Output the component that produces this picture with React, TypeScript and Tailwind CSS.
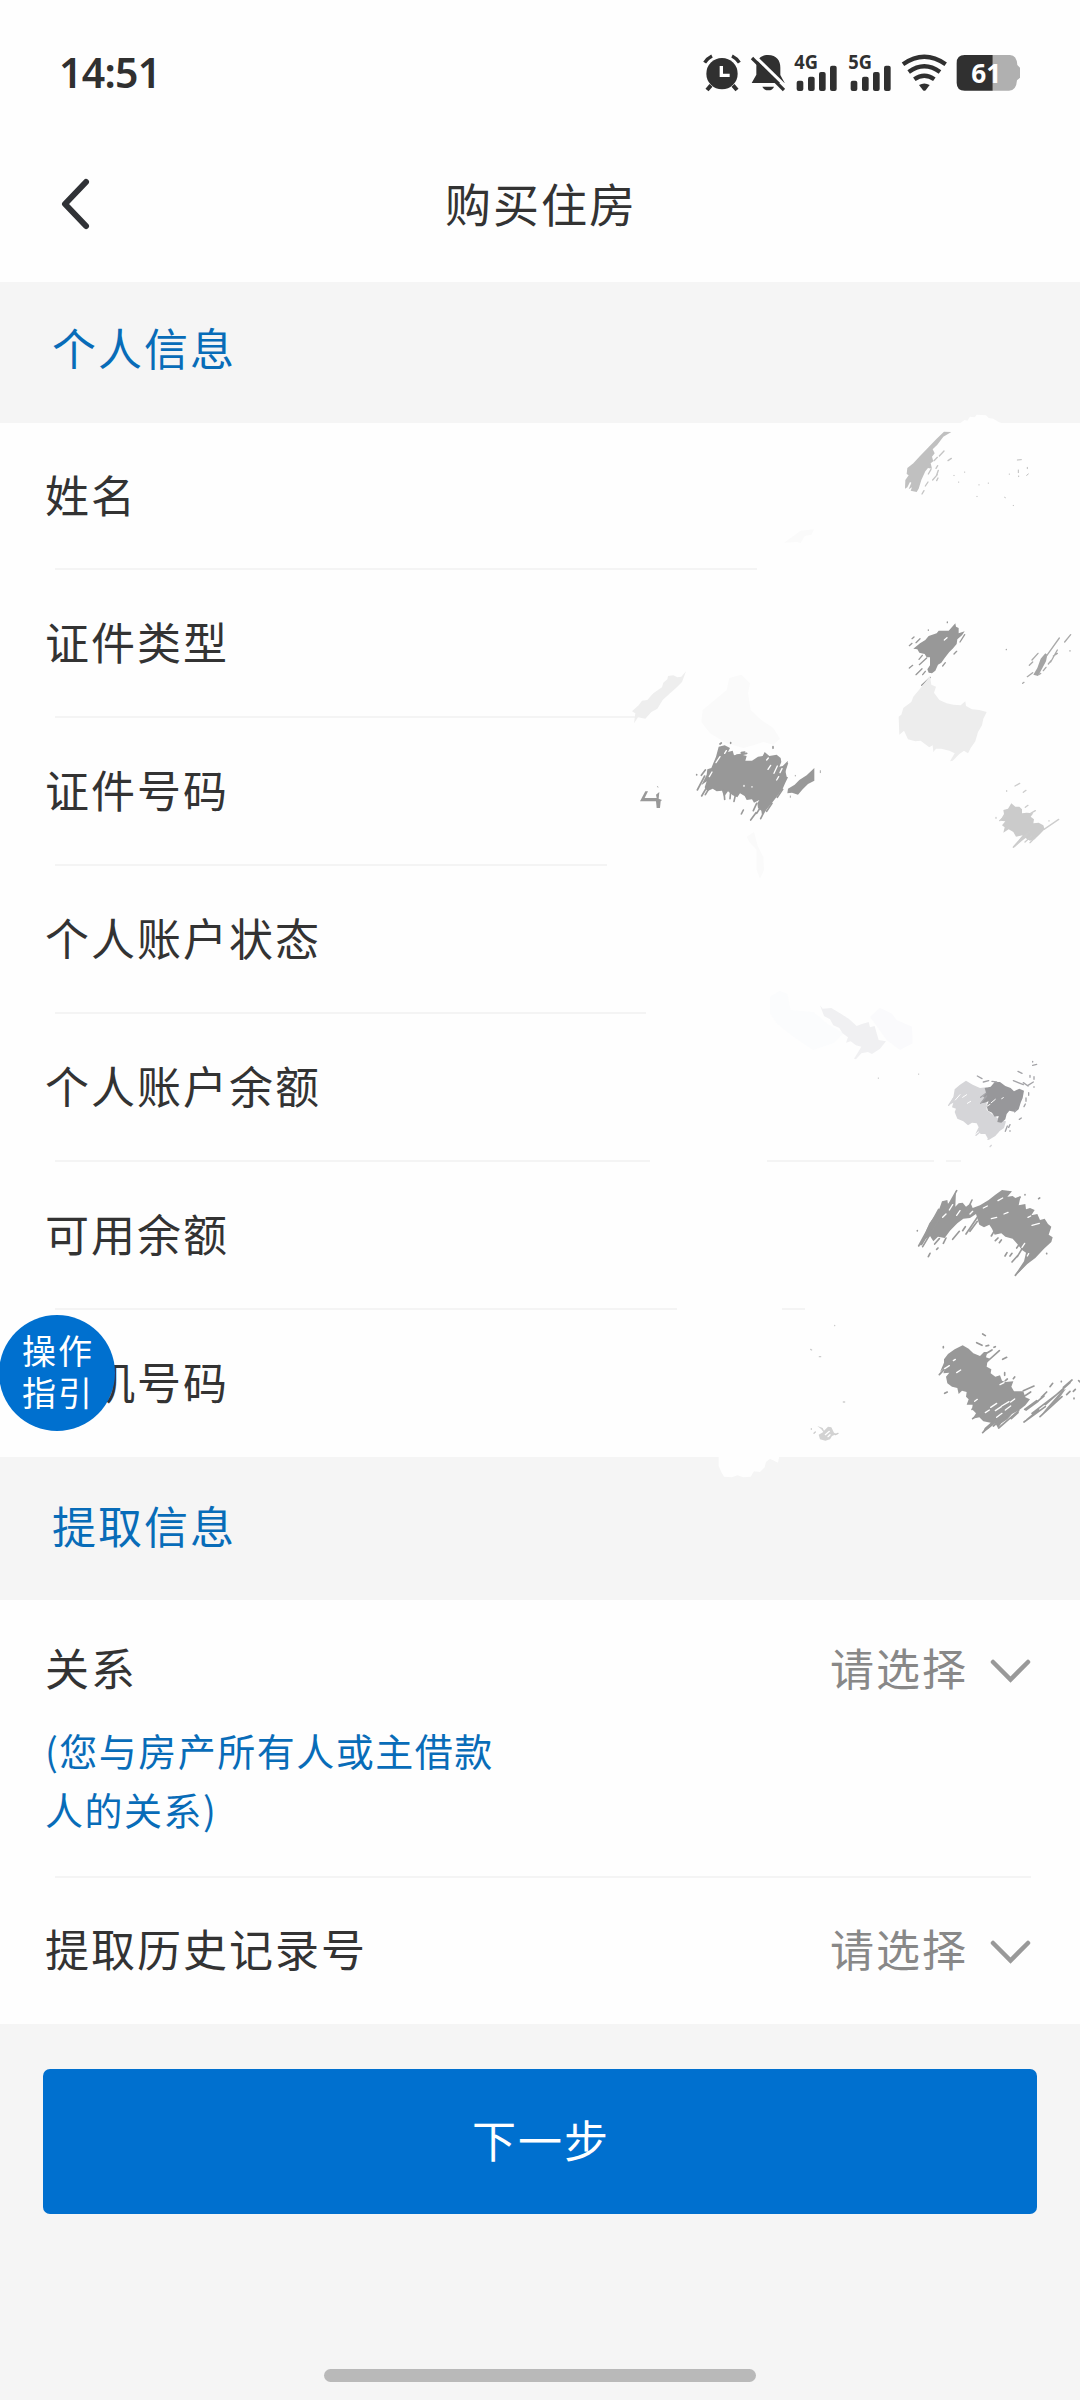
import React from 'react'

interface Divider {
  from: number;
  to: number;
}

interface InfoRowProps {
  label: string;
  dividers: Divider[];
}

interface SelectRowProps {
  label: string;
  hint?: string;
}

const infoRows: InfoRowProps[] = [
  { label: '姓名', dividers: [{ from: 55, to: 757 }] },
  { label: '证件类型', dividers: [{ from: 55, to: 636 }] },
  { label: '证件号码', dividers: [{ from: 55, to: 607 }] },
  { label: '个人账户状态', dividers: [{ from: 55, to: 646 }] },
  { label: '个人账户余额', dividers: [{ from: 55, to: 650 }, { from: 767, to: 934 }, { from: 946, to: 961 }] },
  { label: '可用余额', dividers: [{ from: 55, to: 677 }, { from: 782, to: 805 }] },
  { label: '手机号码', dividers: [] },
]

const SignalIcon = ({ label, x }: { label: string; x: number }) => (
  <svg className='h-[39px] w-auto overflow-visible tracking-normal' viewBox={`${x} 69 ${label === '4G' ? 132 : 135} 117`} fill='#303030'>
    <text x={label === '4G' ? 343 : 505} y='117' fontSize='56' fontWeight='700' textLength='71' lengthAdjust='spacingAndGlyphs' fontFamily='Noto Sans'>{label}</text>
    <g transform={label === '4G' ? '' : 'translate(162 0)'}>
      <rect x='350' y='152' width='20' height='31' rx='6' />
      <rect x='384' y='140' width='20' height='43' rx='6' />
      <rect x='417' y='126' width='20' height='57' rx='6' />
      <rect x='450' y='107' width='20' height='76' rx='6' />
    </g>
  </svg>
)

const StatusBar = () => {
  return (
    <div className='flex h-[120px] items-start justify-between pl-[59px] pr-[59px]'>
      <span className="mt-[43px] font-['Noto_Sans','Noto_Sans_CJK_SC',sans-serif] text-[41px] font-semibold leading-[58px] tracking-[-0.7px] text-[#303030]">14:51</span>
      <div className='mt-[53px] flex gap-[9px] tracking-normal'>
        <svg className='h-[39px] w-[38px]' viewBox='69 69 114 117' fill='none' stroke='#303030'>
          <circle cx='126' cy='131' r='47' fill='#303030' stroke='none' />
          <path d='M74 98q8-13 22-20M178 98q-8-13-22-20' strokeWidth='10' />
          <path d='M93 166L81 180M159 166l12 14' strokeWidth='12' />
          <path d='M124 108v28h25' stroke='#fff' strokeWidth='10' />
        </svg>
        <svg className='h-[39px] w-[35px]' viewBox='210 69 105 117' fill='#303030'>
          <path d='M264 75c26 0 37 17 37 38v22l13 24H215l14-25v-22c0-23 13-37 35-37z' />
          <path d='M247 170h35q-4 11-17 11t-18-11z' />
          <path d='M222 76l98 96' stroke='#fff' strokeWidth='9' />
          <path d='M216 84l96 96' stroke='#303030' strokeWidth='10' />
        </svg>
        <SignalIcon label='4G' x={342} />
        <SignalIcon label='5G' x={501} />
        <svg className='h-[39px] w-[46px]' viewBox='663 69 138 117' fill='none' stroke='#303030' strokeWidth='13'>
          <path d='M669 103q64-45 128 0' />
          <path d='M686 126q47-34 94 0' />
          <path d='M703 148q30-21 60 0' />
          <path d='M717 165q16-9 32 0l-12 16q-4 3-8 0z' fill='#303030' stroke='none' />
        </svg>
        <svg className='h-[39px] w-[65px]' viewBox='828 69 195 117'>
          <path d='M938 75h52q20 0 22 30l8 8v30l-9 8q-2 31-24 31h-49z' fill='#b0b0b0' />
          <path d='M938 75h-84q-24 0-24 24v59q0 24 24 24h84z' fill='#303030' />
          <text x='874' y='158' fontSize='82' fontWeight='700' textLength='90' lengthAdjust='spacingAndGlyphs' fill='#fff' fontFamily='Noto Sans'>61</text>
        </svg>
      </div>
    </div>
  )
}

const Header = () => {
  return (
    <div className='flex h-[162px] items-center'>
      <div className='w-[120px] pl-[60px] pt-[6px]'>
        <svg className='h-[54px] w-[32px]' viewBox='0 0 32 54' fill='none' stroke='#303236' strokeWidth='6' strokeLinecap='round' strokeLinejoin='round'>
          <path d='M26 5L5 27l21 22' />
        </svg>
      </div>
      <h1 className='flex-1 pl-[2px] pt-[2px] text-center text-[46px] leading-[60px] tracking-[2px] text-[#333]'>购买住房</h1>
      <div className='w-[120px]' />
    </div>
  )
}

const InfoRow = ({ label, dividers }: InfoRowProps) => {
  return (
    <div className='relative flex h-[148px] items-center pb-[5px] pl-[45px]'>
      <span>{label}</span>
      {dividers.map(({ from, to }) => (
        <div key={from} className='absolute bottom-[-1px] h-[2px] bg-[#f4f4f4]' style={{ left: from, width: to - from }} />
      ))}
    </div>
  )
}

const SelectRow = ({ label, hint }: SelectRowProps) => {
  return (
    <div className='flex justify-between pl-[45px] pr-[48px]'>
      <div>
        <div>{label}</div>
        {hint && <div className='mt-[23px] w-[462px] text-[38px] leading-[59px] tracking-[1.5px] text-[#086cb8]'>{hint}</div>}
      </div>
      <div className='flex h-[60px] items-center text-[#888]'>
        <span>请选择</span>
        <svg className='ml-[20px] mt-[6px] h-[28px] w-[44px]' viewBox='0 0 44 28' fill='none' stroke='#999' strokeWidth='4.5' strokeLinecap='round'>
          <path d='M5 6l17.500 17.500L40 6' />
        </svg>
      </div>
    </div>
  )
}

// dry brush marks lying over the values of the personal section
const BrushMarks = () => {
  return (
    <svg className='pointer-events-none absolute left-[600px] top-[400px] h-[1080px] w-[480px]' viewBox='0 0 1440 3240' strokeLinecap='round'>
      {/* name */}
      <path d='M1080 70L1094 60 1102 62 1110 50 1124 52 1130 44 1158 46 1166 54 1180 56 1196 66 1206 70z' fill='#fefefe' />
      <path d='M1054 96L1032 95 1010 116 984 143 960 168 940 190 922 204 920 222 926 226 916 240 915 266 922 262 930 246 934 248 926 268 936 262 932 272 950 276 956 266 964 240 976 214 984 204 996 206 992 190 1000 184 996 170 1004 160 998 148 1012 134 1030 110z' fill='#c0c0c0' />
      <path d='M1018 168L1032 153M1002 182L1012 172M1044 182L1054 175M1008 205L1013 197M1010 225L1015 211M998 240L1012 224M985 222L993 208M976 258L984 246M966 282L972 272M1010 242L1014 234' stroke='#c5c5c5' strokeWidth='4' />
      <path d='M1252 180l12-1M1255 210v8M1256 228v2M1280 226l5-4M1282 202v4M1228 222v1M1094 216v1M1076 246v1M1137 254v1M1165 249v1M1131 289v1M1214 292l2 1M1240 316v1M1062 226v1' stroke='#bdbdbd' strokeWidth='3' />
      <path d='M552 428L602 392 642 388 634 404 614 408 602 430 592 426z' fill='#fafafa' />

      {/* id type */}
      <path d='M1066 670L1046 692 1016 692 1010 700 986 708 976 720 960 730 940 746 952 748 958 758 974 762 980 772 990 772 990 796 982 808 986 818 996 820 1006 812 1014 794 1024 788 1034 774 1048 756 1058 746 1070 732 1072 718 1086 706 1094 694 1076 700 1076 684 1068 680z' fill='#989898' />
      <path d='M928 737l8-7M936 716l6-5M948 728l12-12M957 778l10-12M928 804l10-8M948 824l18-18M958 794l22-20M968 824l8-10M965 856l26-24M1062 762l8-8M1028 798l8-10M1080 726l14-22M985 690v1M1042 666v2' stroke='#999' strokeWidth='4' />
      <path d='M1033 720l8-7' stroke='#fff' strokeWidth='4' />
      <path d='M1300 824L1312 804 1322 776 1336 760 1342 764 1338 784 1326 806 1314 828z' fill='#a4a4a4' />
      <path d='M1338 770L1378 714M1352 786L1372 750M1360 768l12-8M1394 726l18-22M1345 792l8-10M1296 780l18-20M1288 796l10-10M1282 830l16-12M1268 850l4-3M1330 812l8-10M1316 824l6-4M1410 752v1M1219 748v1' stroke='#aaa' strokeWidth='4' />

      {/* pale marks */}
      <path d='M258 814L244 830 232 832 220 826 204 828 202 838 190 848 186 862 160 880 142 900 126 902 116 916 96 934 106 940 102 970 114 952 136 956 154 936 172 926 188 900 210 880 228 864 246 846z' fill='#eeeeee' />
      <path d='M380 870L388 834 424 824 450 850 444 880 452 930 484 960 520 984 540 1016 520 1034 490 1026 460 1036 430 1044 380 1030 330 1000 304 966 308 930 344 900z' fill='#fafafa' />
      <path d='M990 828L976 846 962 864 940 890 934 906 910 924 904 944 896 950 898 1004 912 992 924 1018 946 1024 962 1022 978 1034 988 1042 998 1036 1000 1056 1008 1046 1024 1046 1048 1052 1064 1060 1050 1084 1058 1082 1078 1062 1092 1052 1104 1060 1112 1044 1126 1024 1134 996 1146 976 1150 956 1160 936 1138 930 1116 928 1098 918 1096 904 1082 916 1060 914 1040 910 1018 900 1002 878 1008 860 994 854z' fill='#ededed' />

      {/* id number */}
      <g transform='translate(0 1020)'>
        <path d='M356 20L374 16 390 24 384 36 398 32 402 46 418 42 440 48 436 62 456 62 474 50 488 48 494 36 508 48 530 44 542 54 544 66 538 80 548 78 564 62 556 92 560 110 564 112 556 128 548 146 532 168 518 186 500 208 486 226 484 212 474 204 472 190 478 180 462 188 456 178 440 180 434 168 420 160 412 172 398 166 384 154 372 170 366 152 350 154 338 146 322 154 314 142 320 124 304 136 320 104 322 88 334 84 348 50z' fill='#989898' />
        <path d='M292 150l22-42M305 168l14-24M316 164l12-20M304 106l12-16M374 178l-2-26M390 176l2-20M402 184l4-18M424 222l6-12M452 240l16-22M460 212l10-22M470 220l10-16M482 236l14-28M500 214l16-24M360 12l4-3M392 8v2M410 46l30-6M424 38l10-2M519 20v5M290 104v1M532 172l16-24M552 100l10-30' stroke='#999' strokeWidth='5' />
        <path d='M348 68l12-18M328 110l8-14M504 88l8-12M522 100l10-22M530 120l6-10M432 136v3M456 140v1M500 60l5-6M374 40l5-8M540 98l6-12' stroke='#fff' strokeWidth='4' />
        <path d='M643 84V122L624 132 608 148 594 164 576 158 562 160 564 146 584 134 598 120 620 106z' fill='#989898' />
        <path d='M661 98v-6M586 106v2M571 168v4' stroke='#aaa' strokeWidth='3' />
        <path d='M136 154L120 184H168L170 204H180L182 184 186 180 176 176 178 156 168 164 170 174H134L144 154z' fill='#999' />
        <path d='M172 140l2 1' stroke='#aaa' strokeWidth='3' />
        <path d='M440 290L462 276 474 320 490 350 492 390 480 416 470 390 470 330 448 306z' fill='#fafafa' />

        {/* right edge */}
        <path d='M1234 190L1246 200 1258 200 1266 208 1266 220 1280 218 1300 220 1292 230 1302 238 1300 250 1316 248 1330 256 1334 268 1318 284 1304 298 1290 302 1276 294 1256 308 1244 322 1238 320 1254 302 1268 286 1248 290 1240 276 1226 268 1210 278 1214 262 1206 256 1216 244 1200 242 1212 222 1210 210 1224 206z' fill='#cbcbcb' />
        <path d='M1332 268L1376 238M1240 322l42-36M1260 300l28-24M1275 306l20-18M1290 308l16-16M1199 242l16-14M1245 138l14-8M1220 154v-2M1270 157l8-6M1276 202l8-6M1292 220l14-8M1347 242v1M1188 232v3' stroke='#cdcdcd' strokeWidth='4' />

        {/* account state */}
        <path d='M510 770L540 752 562 762 572 810 640 816 680 850 730 880 700 910 640 930 580 890 530 850 510 820z' fill='#fbfcfd' />
        <path d='M810 830L840 804 874 820 890 840 936 860 938 910 900 930 860 900z' fill='#fafafc' />
        <path d='M660 796L668 806 694 804 720 820 746 836 770 858 786 852 806 846 810 862 824 858 830 880 836 900 858 904 840 926 816 942 804 936 784 940 768 958 762 956 776 934 784 920 768 916 752 904 738 908 744 892 728 880 718 864 700 856 690 838 672 828z' fill='#f0f0f2' />
      </g>

      <g transform='translate(0 1980)'>
        {/* account balance */}
        <path d='M1098 62L1118 74 1140 84 1160 82 1160 150 1200 180 1218 184 1212 204 1198 214 1186 228 1166 240 1156 222 1142 222 1136 214 1126 222 1136 202 1130 190 1116 188 1104 196 1090 184 1072 176 1064 156 1068 146 1056 142 1060 128 1046 136 1060 112 1064 88 1080 74z' fill='#d5d5d8' />
        <path d='M1154 84L1172 80 1184 66 1200 66 1216 78 1232 84 1242 94 1258 86 1272 92 1268 114 1262 128 1256 148 1246 156 1228 152 1220 162 1216 178 1204 188 1192 186 1196 168 1184 170 1176 158 1164 152 1160 138 1166 124 1154 128 1144 130 1154 110 1148 112 1158 98z' fill='#97979a' />
        <path d='M1142 130l18-22M1142 112l16-12M1132 48l14 8M1150 66l16-4M1176 64l14 2M1240 62l30 12M1270 68l14 10M1254 34l12 6M1298 16l12-3M1298 6v-2M1286 106v-8M1278 124v-10M1272 140l4-8M1244 156l4-6M1258 178l6-4M1284 76l16-10M1302 58v-8M1302 82v-2M1290 52v-6M1226 202l4-8M1230 214v-2M1216 214l6-16' stroke='#a4a4a8' strokeWidth='4' />
        <path d='M1128 226l12-10M1164 238l18-14M1192 218l10-14M1170 260l4-4M1046 136l16-24' stroke='#d5d5d8' strokeWidth='4' />
        <path d='M1174 128l12-10M1162 138l8-5M1205 116l5-3M1088 112l12-8M1102 130l10-6M1066 120l14-16' stroke='#fff' strokeWidth='3' />
        <path d='M835 54v1M956 42v1' stroke='#bbb' strokeWidth='3' />

        {/* available balance */}
        <path d='M1068 392L1054 422 1044 432 1042 420 1026 424 1018 446 1004 468 988 490 980 508 972 530 958 556 966 556 978 536 990 528 1000 544 1014 530 1034 534 1050 512 1072 490 1090 476 1110 474 1128 462 1138 494 1152 502 1168 494 1176 506 1184 524 1204 520 1216 530 1238 536 1252 552 1266 570 1278 578 1272 604 1244 646 1258 636 1282 612 1306 594 1332 566 1354 546 1358 532 1346 524 1354 500 1344 492 1334 476 1320 480 1312 462 1294 466 1304 450 1290 444 1278 448 1276 432 1256 436 1262 408 1246 414 1238 408 1222 410 1236 394 1206 390 1186 404 1166 420 1140 436 1118 444 1112 430 1098 440 1088 428 1076 430 1066 440z' fill='#989898' />
        <path d='M956 558l60-110M968 560l72-120M1034 456l36-64M1098 458l18-38M1098 522l34-50M1110 514l22-30M1058 538l20-24M1088 512l8-12M1246 646l46-52M1236 606l18-20M1252 590l20-34M1230 588l6-8M1215 588l6-10M1250 564l14-20M1174 528l8-14M1186 542l8-8M1198 548l6-8M985 590l5-10M1010 568l4-4M1004 552l14-16M1030 550l8-16M1254 418l6-6M952 512v1M1275 404v1M1316 416l3-2M1340 580v1' stroke='#999' strokeWidth='5' />
        <path d='M1070 466l10-14M1048 450l10-16M1150 444l12-6M1194 422l14-8M1212 462l12-5M1296 496l22-6M1284 472l8-4M1174 476l16-4M1266 562l8-12M1282 588l4-7M1028 472l10-10M1110 462l8-8' stroke='#fff' strokeWidth='4' />

        {/* phone */}
        <path d='M1088 856L1106 866 1120 880 1140 888 1152 876 1162 876 1158 892 1170 896 1162 906 1160 920 1174 928 1172 940 1186 950 1200 946 1206 962 1216 966 1240 964 1234 980 1242 994 1270 994 1276 1012 1290 1018 1276 1036 1258 1050 1236 1062 1222 1078 1204 1090 1194 1104 1186 1090 1166 1106 1148 1118 1154 1104 1172 1088 1150 1084 1138 1072 1118 1076 1128 1060 1116 1048 1118 1034 1100 1034 1106 1018 1098 1010 1100 996 1086 992 1076 1002 1072 984 1056 980 1042 970 1038 950 1048 938 1030 940 1036 922 1020 936 1032 908 1032 898 1044 882 1064 868z' fill='#989898' />
        <path d='M1018 944l26-28M1148 1118l44-42M1180 1098l50-42M1196 1104l60-52M1234 1076l20-18M1118 1076l26-20M1116 1048l20-18M1274 1048l36-26M1262 1016l30-20M1272 1086l64-46M1296 1060l94-72M1320 1070l66-60M1280 1080l36-30M1336 1034l74-66M1278 1050l36-26M1390 982l26-22M1270 992l32-14M1308 1028l24-20M1324 1012l16-16M1350 980l8-10M1400 1004l10-10M1160 906l38-34M1156 882l20-12M1130 848l16 8M1148 822l8 5M1158 858l8-2M1182 862l4-2M1208 898l12-6M1214 946v-8M1240 956l4-5M1216 962l6-5M1420 994l6-6M1422 1014v2M1384 964v1M1034 1000l8-4M1030 860v3M1436 962l4 4' stroke='#999' strokeWidth='5' />
        <path d='M1340 1044L1384 994 1398 986 1372 1022 1324 1064z' fill='#9b9b9b' />
        <path d='M1070 938l12-8M1034 926l14-9M1060 902l6-4M1172 1042l18-12M1186 1052l18-12M1156 1058l12-8M1232 1026l12-9M1200 974l12-6M1124 1024l8-6M1205 1038l22-13M1216 1050l16-12M1190 1072l16-12' stroke='#fff' strokeWidth='4' />
        <path d='M652 1098L668 1104 672 1112 684 1100 694 1102 702 1118 710 1122 696 1128 690 1138 676 1142 660 1138 656 1124 670 1116 664 1108z' fill='#d2d2d2' />
        <path d='M676 1124l12-10M684 1130l6-6' stroke='#fff' strokeWidth='4' />
        <path d='M642 1120l4-4M634 1106v2M706 1124l8-4M704 796v1M632 868l3 2M658 890h4M730 1026h4' stroke='#ccc' strokeWidth='4' />
        <path d='M356 1188H538L534 1208 522 1202 510 1196 498 1206 494 1222 480 1236 462 1234 452 1250 430 1252 412 1246 396 1252 372 1250 364 1236 356 1218z' fill='#fefefe' />
      </g>
    </svg>
  )
}

export default function App() {
  return (
    <div className="relative flex h-[2400px] w-[1080px] flex-col overflow-hidden bg-[#f5f5f5] font-['Noto_Sans_CJK_SC',sans-serif] text-[44px] leading-[60px] tracking-[2px] text-[#333]">
      <div className='bg-[#fefefe]'>
        <StatusBar />
        <Header />
      </div>

      <div className='h-[141px] pl-[52px] pt-[35px] text-[#086cb8]'>个人信息</div>
      <div className='bg-[#fefefe] [&>*:first-child]:h-[146px]'>
        {infoRows.map((row) => <InfoRow key={row.label} {...row} />)}
      </div>

      <div className='h-[143px] pl-[52px] pt-[38px] text-[#086cb8]'>提取信息</div>
      <div className='bg-[#fefefe]'>
        <div className='h-[276px] pt-[37px]'>
          <SelectRow label='关系' hint='(您与房产所有人或主借款人的关系)' />
        </div>
        <div className='ml-[55px] mr-[49px] h-[2px] bg-[#f4f4f4]' />
        <div className='h-[146px] pt-[40px]'>
          <SelectRow label='提取历史记录号' />
        </div>
      </div>

      <button className='mx-[43px] mt-[45px] h-[145px] rounded-[7px] bg-[#0070cf] pb-[5px] pl-[2px] tracking-[2px] text-white'>下一步</button>
      <div className='mx-auto mb-[18px] mt-auto h-[13px] w-[432px] rounded-full bg-[#b9b9b9]' />

      <BrushMarks />
      <div className='absolute left-[-1px] top-[1315px] flex h-[116px] w-[116px] flex-col items-center justify-center rounded-full bg-[#0070cf] pb-[5px] pl-[2px] text-[34px] leading-[42px] text-white'>
        <span>操作</span>
        <span>指引</span>
      </div>
    </div>
  )
}
